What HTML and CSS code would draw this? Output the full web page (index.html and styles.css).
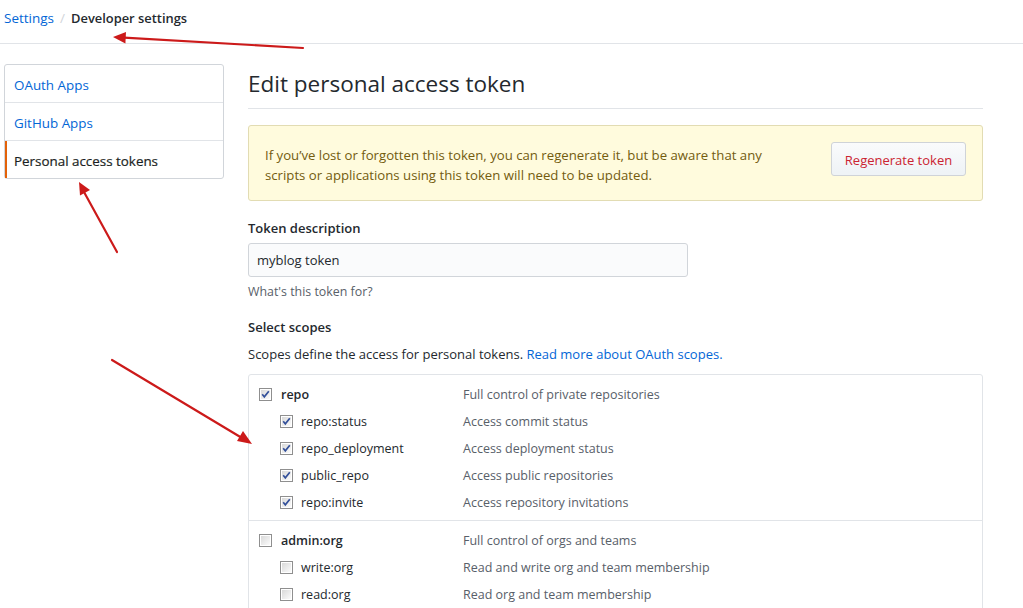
FILE: index.html
```html
<!DOCTYPE html>
<html>
<head>
<meta charset="utf-8">
<link rel="stylesheet" href="styles.css">
</head>
<body>
<svg width="0" height="0" class="defs">
  <defs>
    <linearGradient id="cbg" x1="0" y1="0" x2="1" y2="1">
      <stop offset="0" stop-color="#d9d9d9"/>
      <stop offset="1" stop-color="#fbfbfb"/>
    </linearGradient>
    <symbol id="cb-on" viewBox="0 0 13 13">
      <rect x="0.5" y="0.5" width="12" height="12" fill="#fff" stroke="#8f8f8f"/>
      <rect x="2" y="2" width="9" height="9" fill="url(#cbg)"/>
      <path d="M3.2 6.3 L5.3 8.8 L9.8 3.2" fill="none" stroke="#33509a" stroke-width="1.7"/>
    </symbol>
    <symbol id="cb-off" viewBox="0 0 13 13">
      <rect x="0.5" y="0.5" width="12" height="12" fill="#fff" stroke="#8f8f8f"/>
      <rect x="2" y="2" width="9" height="9" fill="url(#cbg)"/>
    </symbol>
  </defs>
</svg>

<header class="breadcrumb">
  <a class="crumb-link" href="#">Settings</a>
  <span class="crumb-sep">/</span>
  <span class="crumb-current">Developer settings</span>
</header>

<div class="layout">
  <nav class="sidebar">
    <a class="menu-item" href="#">OAuth Apps</a>
    <a class="menu-item" href="#">GitHub Apps</a>
    <a class="menu-item active" href="#">Personal access tokens</a>
  </nav>

  <main class="main">
    <h2 class="page-title">Edit personal access token</h2>

    <div class="flash">
      <p class="flash-text">If you’ve lost or forgotten this token, you can regenerate it, but be aware that any<br>scripts or applications using this token will need to be updated.</p>
      <button class="btn-danger">Regenerate token</button>
    </div>

    <div class="form-group">
      <label class="form-label">Token description</label>
      <div class="input">myblog token</div>
      <p class="note">What's this token for?</p>
    </div>

    <div class="form-group scopes-group">
      <label class="form-label">Select scopes</label>
      <p class="scopes-intro">Scopes define the access for personal tokens. <a href="#" class="link">Read more about OAuth scopes.</a></p>

      <div class="scopes">
        <div class="scope-group">
          <div class="scope-row parent">
            <span class="scope-name"><svg class="cb"><use href="#cb-on"/></svg>repo</span>
            <span class="scope-desc">Full control of private repositories</span>
          </div>
          <div class="scope-row child">
            <span class="scope-name"><svg class="cb"><use href="#cb-on"/></svg>repo:status</span>
            <span class="scope-desc">Access commit status</span>
          </div>
          <div class="scope-row child">
            <span class="scope-name"><svg class="cb"><use href="#cb-on"/></svg>repo_deployment</span>
            <span class="scope-desc">Access deployment status</span>
          </div>
          <div class="scope-row child">
            <span class="scope-name"><svg class="cb"><use href="#cb-on"/></svg>public_repo</span>
            <span class="scope-desc">Access public repositories</span>
          </div>
          <div class="scope-row child">
            <span class="scope-name"><svg class="cb"><use href="#cb-on"/></svg>repo:invite</span>
            <span class="scope-desc">Access repository invitations</span>
          </div>
        </div>
        <div class="scope-group">
          <div class="scope-row parent">
            <span class="scope-name"><svg class="cb"><use href="#cb-off"/></svg>admin:org</span>
            <span class="scope-desc">Full control of orgs and teams</span>
          </div>
          <div class="scope-row child">
            <span class="scope-name"><svg class="cb"><use href="#cb-off"/></svg>write:org</span>
            <span class="scope-desc">Read and write org and team membership</span>
          </div>
          <div class="scope-row child">
            <span class="scope-name"><svg class="cb"><use href="#cb-off"/></svg>read:org</span>
            <span class="scope-desc">Read org and team membership</span>
          </div>
        </div>
      </div>
    </div>
  </main>
</div>

<svg class="annotations" width="1023" height="608" viewBox="0 0 1023 608">
  <g stroke="#cc1a1a" stroke-width="2.2" fill="none" stroke-linecap="round">
    <line x1="303" y1="48" x2="124" y2="37.6"/>
    <line x1="117" y1="252" x2="84" y2="192"/>
    <line x1="112" y1="360" x2="242" y2="438"/>
  </g>
  <g fill="#cc1a1a">
    <polygon points="113,37 126,32 125.4,43.5"/>
    <polygon points="79,182 90,190 80,195.5"/>
    <polygon points="252,444 237,441 243,431"/>
  </g>
</svg>
</body>
</html>
```

FILE: styles.css
```css
* { box-sizing: border-box; }

html, body {
  margin: 0;
  padding: 0;
  background: #fff;
}

body {
  font-family: "Open Sans", "Noto Sans", "Liberation Sans", sans-serif;
  font-size: 13px;
  color: #24292e;
  width: 1023px;
  height: 608px;
  overflow: hidden;
  position: relative;
}

.defs { position: absolute; }

a { text-decoration: none; }

.breadcrumb {
  height: 44px;
  border-bottom: 1px solid #e1e4e8;
  padding: 8px 4px 0;
  line-height: 20px;
  font-size: 13.5px;
  display: flex;
  align-items: flex-start;
}

.crumb-link { color: #0366d6; }

.crumb-sep {
  color: #d1d5da;
  margin: 0 6px 0 6px;
}

.crumb-current {
  font-weight: 600;
  font-size: 12.9px;
  color: #24292e;
}

.layout {
  display: flex;
  gap: 24px;
  padding: 20px 0 0 4px;
}

.sidebar {
  width: 220px;
  flex: none;
  border: 1px solid #d1d5da;
  border-radius: 3px;
  align-self: flex-start;
  display: flex;
  flex-direction: column;
}

.menu-item {
  display: block;
  height: 38px;
  line-height: 20px;
  padding: 10px 9px 8px;
  font-size: 13.4px;
  color: #0366d6;
  border-bottom: 1px solid #e1e4e8;
}

.menu-item:last-child { border-bottom: 0; height: 37px; }

.menu-item.active {
  color: #1b1f23;
  box-shadow: inset 2px 0 0 #e36209;
  -webkit-text-stroke: 0.2px #1b1f23;
}

.main {
  width: 735px;
  flex: none;
}

.page-title {
  margin: 0;
  padding: 4px 0 8px;
  font-size: 22.5px;
  font-weight: 400;
  line-height: 32px;
  border-bottom: 1px solid #e1e4e8;
  color: #24292e;
}

.flash {
  margin-top: 16px;
  background: #fffbdd;
  border: 1px solid #e2dcb3;
  border-radius: 3px;
  padding: 16px 16px 14px;
  display: flex;
  justify-content: space-between;
  align-items: flex-start;
  min-height: 76px;
}

.flash-text {
  margin: 3px 0 0;
  line-height: 20px;
  font-size: 13.2px;
  color: #735c0f;
}

.btn-danger {
  font-family: inherit;
  font-size: 13px;
  color: #cb2431;
  background: linear-gradient(#fafbfc, #eff3f6 90%);
  border: 1px solid #cfd3d8;
  border-radius: 3px;
  height: 34px;
  width: 135px;
  padding: 1px 12px 0;
  line-height: 20px;
  white-space: nowrap;
}

.form-group { margin-top: 17px; }

.form-label {
  display: block;
  font-weight: 600;
  line-height: 20px;
}

.input {
  margin-top: 5px;
  width: 440px;
  height: 34px;
  background: #fafbfc;
  border: 1px solid #d1d5da;
  border-radius: 3px;
  padding: 0 8px;
  line-height: 33px;
  color: #24292e;
}

.note {
  margin: 5px 0 0;
  font-size: 12.4px;
  line-height: 20px;
  color: #586069;
}

.scopes-group { margin-top: 15px; }

.scopes-intro {
  margin: 7px 0 0;
  line-height: 20px;
}

.link { color: #0366d6; }

.scopes {
  margin-top: 10px;
  border: 1px solid #e1e4e8;
  border-radius: 3px;
}

.scope-group {
  padding: 6px 10px 4px;
  border-bottom: 1px solid #e1e4e8;
}

.scope-row {
  display: flex;
  align-items: center;
  height: 27px;
  font-size: 12.5px;
}

.scope-name {
  display: flex;
  align-items: center;
  width: 204px;
  flex: none;
}

.scope-row.child .scope-name { padding-left: 21px; }

.parent .scope-name { font-weight: 600; }

.cb {
  width: 13px;
  height: 13px;
  flex: none;
  margin-right: 9px;
  margin-top: -1px;
}

.child .cb { margin-right: 8px; }

.scope-desc { color: #586069; }

.annotations {
  position: absolute;
  left: 0;
  top: 0;
  pointer-events: none;
}
```
